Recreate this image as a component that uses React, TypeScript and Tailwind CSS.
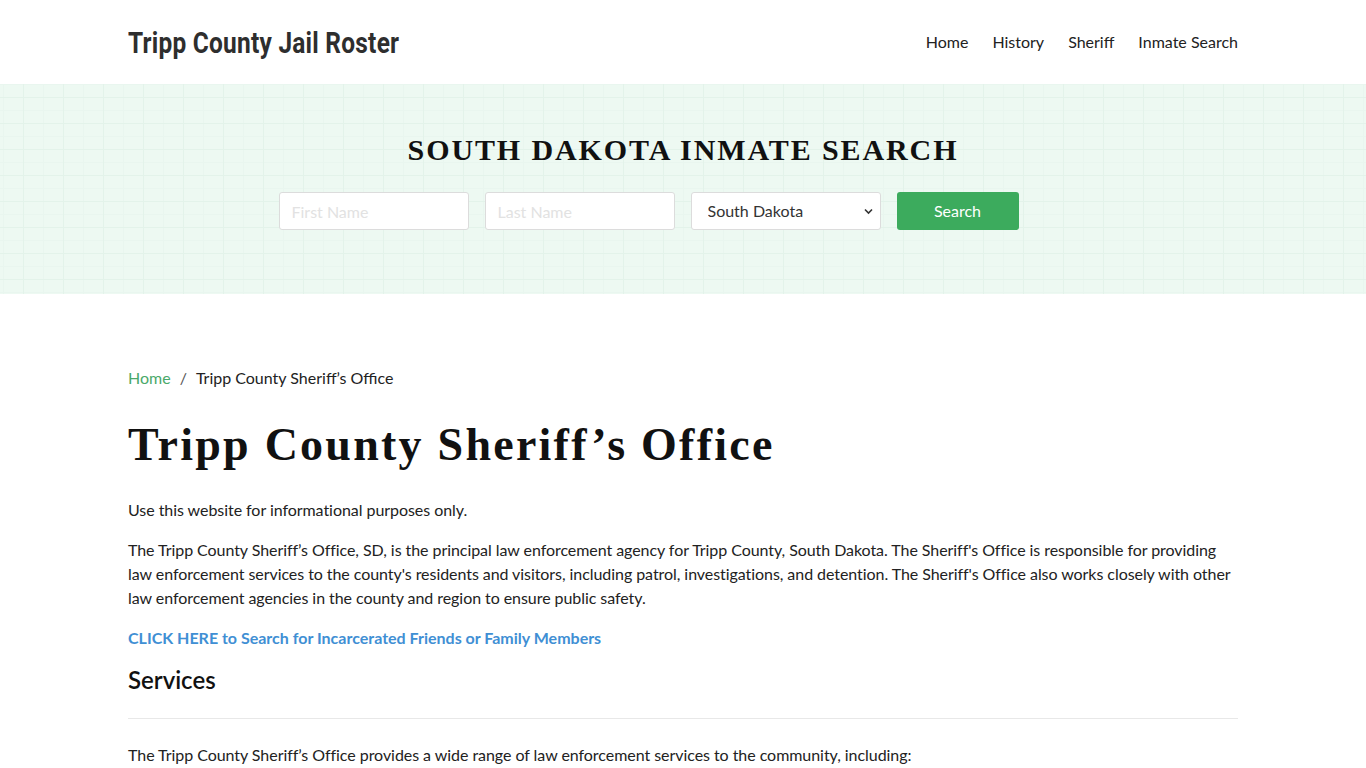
import React from "react";

const navItems = ["Home", "History", "Sheriff", "Inmate Search"];

function Header() {
  return (
    <header className="h-[84px] bg-white">
      <div className="mx-auto flex h-full w-[1110px] items-center justify-between">
        <a className="inline-block origin-left scale-x-[0.815] font-['Roboto',sans-serif] text-[30px] font-bold tracking-[0.3px] whitespace-nowrap text-[#2e2e2e]">
          Tripp County Jail Roster
        </a>
        <nav className="flex items-center gap-[24px] font-['Lato',sans-serif] text-[16px] text-[#222]">
          {navItems.map((n) => (
            <a key={n}>{n}</a>
          ))}
        </nav>
      </div>
    </header>
  );
}

function Hero() {
  return (
    <section className="h-[210px] bg-[#edf9f2] bg-[linear-gradient(to_right,#e3f3ea_1px,transparent_1px),linear-gradient(to_bottom,#e3f3ea_1px,transparent_1px),linear-gradient(to_right,#e9f6ef_1px,transparent_1px),linear-gradient(to_bottom,#e9f6ef_1px,transparent_1px)] bg-[size:40px_26px,40px_26px,20px_13px,20px_13px] bg-[position:23px_13px,23px_13px,3px_0px,3px_0px]">
      <div className="flex flex-col items-center pt-[48px]">
        <h2 className="font-['Liberation_Serif',serif] text-[30px] font-bold leading-[36px] tracking-[1.9px] text-[#111]">
          SOUTH DAKOTA INMATE SEARCH
        </h2>
        <form className="mt-[24px] mr-[69px] flex gap-[16px] font-['Lato',sans-serif] text-[16px]">
          <input
            placeholder="First Name"
            className="h-[38px] w-[190px] rounded-[3px] border border-[#dcdcdc] bg-white px-[12px] text-[#444] placeholder:text-[#e2e2e2] outline-none"
          />
          <input
            placeholder="Last Name"
            className="h-[38px] w-[190px] rounded-[3px] border border-[#dcdcdc] bg-white px-[12px] text-[#444] placeholder:text-[#e2e2e2] outline-none"
          />
          <div className="relative h-[38px] w-[190px] rounded-[3px] border border-[#dcdcdc] bg-white">
            <select className="h-full w-full appearance-none bg-transparent pl-[16px] text-[#333] outline-none">
              <option>South Dakota</option>
            </select>
            <svg
              className="pointer-events-none absolute right-[7px] top-[15px]"
              width="9"
              height="7"
              viewBox="0 0 9 7"
            >
              <path d="M1 1.5l3.5 3.5 3.5-3.5" fill="none" stroke="#333" strokeWidth="1.6" />
            </svg>
          </div>
          <button
            type="button"
            className="h-[38px] w-[122px] rounded-[3px] bg-[#3cab5d] text-[16px] text-white"
          >
            Search
          </button>
        </form>
      </div>
    </section>
  );
}

function Main() {
  return (
    <main className="mx-auto w-[1110px] pt-[72px] font-['Lato',sans-serif] text-[16px] leading-[24px] text-[#222]">
      <nav className="flex items-center">
        <a className="text-[#4aa96a]">Home</a>
        <span className="px-[9px] text-[#555]">/</span>
        <span>Tripp County Sheriff’s Office</span>
      </nav>
      <h1 className="mt-[29px] font-['Liberation_Serif',serif] text-[46px] font-bold leading-[52px] tracking-[2.25px] text-[#111]">
        Tripp County Sheriff’s Office
      </h1>
      <p className="mt-[27px] tracking-[-0.05px]">Use this website for informational purposes only.</p>
      <p className="mt-[16px] tracking-[-0.06px]">
        The Tripp County Sheriff’s Office, SD, is the principal law enforcement agency for Tripp County, South Dakota. The Sheriff's Office is responsible for providing law enforcement services to the county's residents and visitors, including patrol, investigations, and detention. The Sheriff's Office also works closely with other law enforcement agencies in the county and region to ensure public safety.
      </p>
      <p className="mt-[16px]">
        <a className="font-bold text-[#3f8fd4]">CLICK HERE to Search for Incarcerated Friends or Family Members</a>
      </p>
      <h3 className="mt-[14px] text-[24px] font-semibold leading-[32px] text-[#111]">Services</h3>
      <hr className="mt-[22px] border-t border-[#e8e8e8]" />
      <p className="mt-[24px] tracking-[-0.05px]">
        The Tripp County Sheriff’s Office provides a wide range of law enforcement services to the community, including:
      </p>
    </main>
  );
}

export default function App() {
  return (
    <div className="min-h-screen bg-white">
      <Header />
      <Hero />
      <Main />
    </div>
  );
}
